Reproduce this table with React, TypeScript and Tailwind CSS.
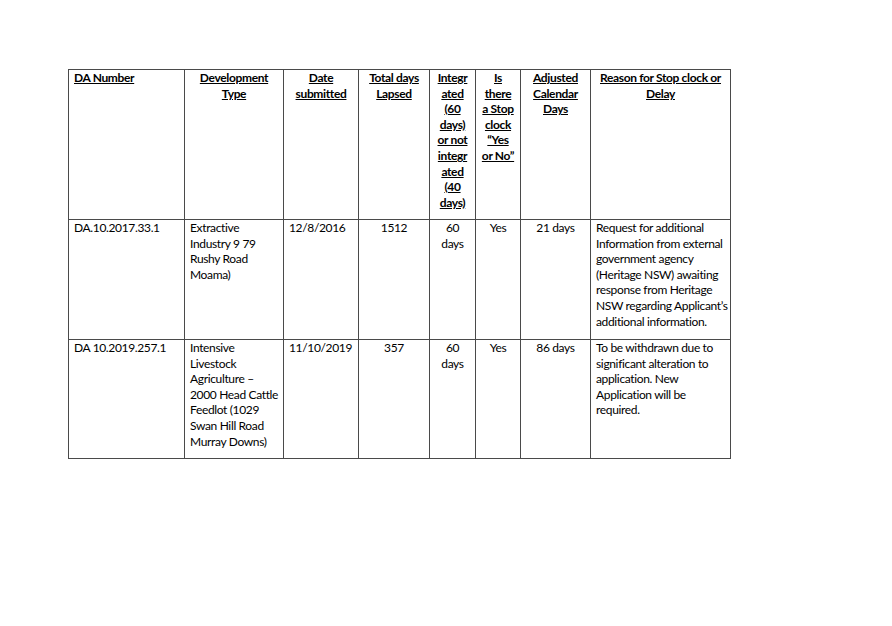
import React from "react";

const lines = (arr: string[]) =>
  arr.map((l, i) => (
    <React.Fragment key={i}>
      {l}
      {i < arr.length - 1 && <br />}
    </React.Fragment>
  ));

const th = "border border-[#4a4a4a] align-top font-bold px-[5px] pt-0 text-center whitespace-nowrap";
const td = "border border-[#4a4a4a] align-top px-[5px] pt-0 font-normal whitespace-nowrap";

export default function App() {
  return (
    <div
      className="w-[892px] h-[626px] bg-white text-black pl-[68px] pt-[69px]"
      style={{ fontFamily: "Lato, 'Open Sans', sans-serif" }}
    >
      <table className="table-fixed border-collapse text-[12px] leading-[15.6px] tracking-[-0.35px] w-[662px]">
        <colgroup>
          <col className="w-[116px]" />
          <col className="w-[99px]" />
          <col className="w-[75px]" />
          <col className="w-[71px]" />
          <col className="w-[46px]" />
          <col className="w-[45px]" />
          <col className="w-[70px]" />
          <col className="w-[140px]" />
        </colgroup>
        <thead>
          <tr className="h-[150px]">
            <th className={th + " text-left"}>
              <span className="underline">DA Number</span>
            </th>
            <th className={th}>
              <span className="underline">{lines(["Development", "Type"])}</span>
            </th>
            <th className={th}>
              <span className="underline">{lines(["Date", "submitted"])}</span>
            </th>
            <th className={th}>
              <span className="underline">{lines(["Total days", "Lapsed"])}</span>
            </th>
            <th className={th + " px-0"}>
              <span className="underline">
                {lines(["Integr", "ated", "(60", "days)", "or not", "integr", "ated", "(40", "days)"])}
              </span>
            </th>
            <th className={th + " px-0"}>
              <span className="underline">
                {lines(["Is", "there", "a Stop", "clock", "\u201CYes", "or No\u201D"])}
              </span>
            </th>
            <th className={th}>
              <span className="underline">{lines(["Adjusted", "Calendar", "Days"])}</span>
            </th>
            <th className={th}>
              <span className="underline">{lines(["Reason for Stop clock or", "Delay"])}</span>
            </th>
          </tr>
        </thead>
        <tbody>
          <tr className="h-[120px]">
            <td className={td}>DA.10.2017.33.1</td>
            <td className={td}>{lines(["Extractive", "Industry 9 79", "Rushy Road", "Moama)"])}</td>
            <td className={td}>12/8/2016</td>
            <td className={td + " text-center"}>1512</td>
            <td className={td + " text-center px-0"}>{lines(["60", "days"])}</td>
            <td className={td + " text-center px-0"}>Yes</td>
            <td className={td + " text-center"}>21 days</td>
            <td className={td}>
              {lines([
                "Request for additional",
                "Information from external",
                "government agency",
                "(Heritage NSW) awaiting",
                "response from Heritage",
                "NSW regarding Applicant\u2019s",
                "additional information.",
              ])}
            </td>
          </tr>
          <tr className="h-[119px]">
            <td className={td}>DA 10.2019.257.1</td>
            <td className={td}>
              {lines([
                "Intensive",
                "Livestock",
                "Agriculture \u2013",
                "2000 Head Cattle",
                "Feedlot (1029",
                "Swan Hill Road",
                "Murray Downs)",
              ])}
            </td>
            <td className={td}>11/10/2019</td>
            <td className={td + " text-center"}>357</td>
            <td className={td + " text-center px-0"}>{lines(["60", "days"])}</td>
            <td className={td + " text-center px-0"}>Yes</td>
            <td className={td + " text-center"}>86 days</td>
            <td className={td}>
              {lines([
                "To be withdrawn due to",
                "significant alteration to",
                "application. New",
                "Application will be",
                "required.",
              ])}
            </td>
          </tr>
        </tbody>
      </table>
    </div>
  );
}
